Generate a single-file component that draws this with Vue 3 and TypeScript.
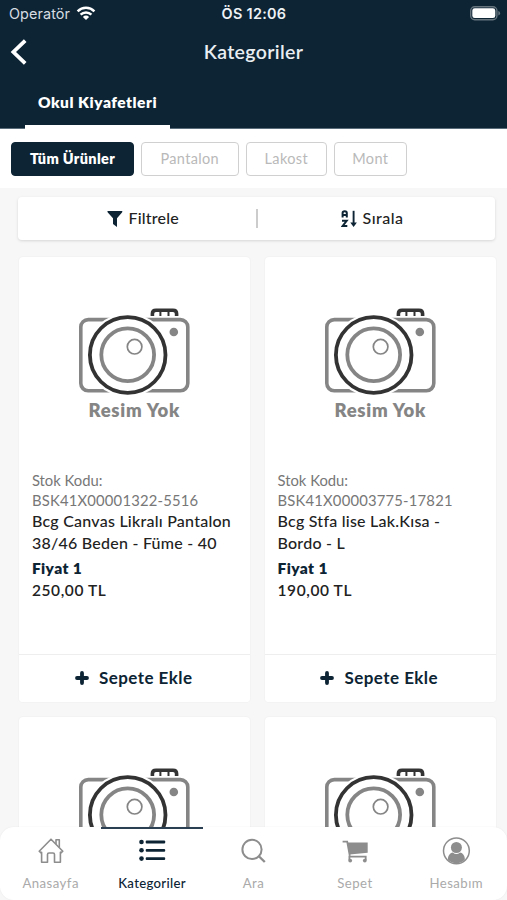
<script setup lang="ts">
interface Product {
  code: string
  name: string[]
  price: string
}

const chips: string[] = ['Tüm Ürünler', 'Pantalon', 'Lakost', 'Mont']

const products: Product[] = [
  { code: 'BSK41X00001322-5516', name: ['Bcg Canvas Likralı Pantalon', '38/46 Beden - Füme - 40'], price: '250,00 TL' },
  { code: 'BSK41X00003775-17821', name: ['Bcg Stfa lise Lak.Kısa -', 'Bordo - L'], price: '190,00 TL' },
  { code: '', name: [], price: '' },
  { code: '', name: [], price: '' },
]

const tabs: string[] = ['Anasayfa', 'Kategoriler', 'Ara', 'Sepet', 'Hesabım']
</script>

<template>
  <div class="screen">
    <header class="header">
      <div class="status">
        <div class="carrier">
          <span>Operatör</span>
          <svg width="20" height="15" viewBox="0 0 20 15" fill="none" stroke="#fff" stroke-width="2.5">
            <path d="M1.6 5.3A12 12 0 0 1 18.4 5.3" />
            <path d="M4.6 8.6A7.7 7.7 0 0 1 15.4 8.6" />
            <path d="M10 14L6.9 10.9A4.4 4.4 0 0 1 13.1 10.9Z" fill="#fff" stroke="none" />
          </svg>
        </div>
        <span class="clock">ÖS 12:06</span>
        <svg class="battery" width="31" height="15" viewBox="0 0 31 15">
          <rect x="0.7" y="0.7" width="26.2" height="13" rx="4" fill="none" stroke="#66747e" stroke-width="1.4" />
          <rect x="2.3" y="2.3" width="23" height="9.8" rx="2.4" fill="#fff" />
          <path d="M28.3 5v4.6q1.8-.6 1.8-2.3T28.3 5" fill="#66747e" />
        </svg>
      </div>
      <div class="titlebar">
        <svg width="18" height="28" viewBox="0 0 18 28" fill="none" stroke="#fff" stroke-width="3.8">
          <path d="M15.2 2.6L3.4 14L15.2 25.4" />
        </svg>
        <h1>Kategoriler</h1>
      </div>
      <div class="category"><span>Okul Kiyafetleri</span></div>
    </header>

    <nav class="chips">
      <button v-for="(chip, i) in chips" :key="chip" :class="['chip', 'chip-' + i]"><span>{{ chip }}</span></button>
    </nav>

    <main class="content">
      <div class="tools">
        <div class="tool filter">
          <svg width="16" height="18" viewBox="0 0 16 18" fill="#0c2434">
            <path d="M.6 1H15.2Q15.6 1.7 15 2.6L10 8.3V17L6 14V8.3L.8 2.6Q.1 1.7.6 1Z" />
          </svg>
          <span>Filtrele</span>
        </div>
        <i class="separator"></i>
        <div class="tool sort">
          <svg width="17" height="18" viewBox="0 0 17 18" fill="none" stroke="#0c2434" stroke-width="2">
            <path d="M1.6 7.5V3Q1.6 1.3 3.7 1.3T5.8 3V7.5M1.6 5H5.8M1 10.8H5.7L1.7 16H6.3" />
            <path d="M12.6 .8V14" stroke-width="1.9" />
            <path d="M9.3 12.6H15.9L12.6 17Z" fill="#0c2434" stroke="none" />
          </svg>
          <span>Sırala</span>
        </div>
      </div>

      <section class="grid">
        <article v-for="(p, i) in products" :key="i" class="card">
          <svg class="photo" width="230" height="211" viewBox="0 1 230 211" fill="none">
            <rect x="61.8" y="63.6" width="107" height="71.2" rx="7.5" stroke="#858585" stroke-width="3.6" />
            <circle cx="108.7" cy="99" r="42" fill="#fff" />
            <circle cx="108.7" cy="99" r="37.8" stroke="#333" stroke-width="3.8" />
            <circle cx="108.7" cy="98.7" r="26.4" stroke="#858585" stroke-width="3.8" />
            <circle cx="115.6" cy="90.7" r="7.3" stroke="#858585" stroke-width="1.7" />
            <circle cx="154.8" cy="76" r="4.3" fill="#858585" />
            <path d="M133.4 60V57.8Q133.4 54.2 137 54.2H154Q157.6 54.2 157.6 57.8V60" stroke="#333" stroke-width="3.6" />
            <path d="M141.4 55V60M149.5 55V60" stroke="#333" stroke-width="2" />
            <text v-if="p.code" class="no-image" x="69.4" y="161.2" textLength="91" lengthAdjust="spacing">Resim Yok</text>
          </svg>
          <template v-if="p.code">
            <div class="info">
              <p class="stock">Stok Kodu:</p>
              <p class="stock code">{{ p.code }}</p>
              <h2><span v-for="line in p.name" :key="line">{{ line }}</span></h2>
              <p class="price-name">Fiyat 1</p>
              <p class="price">{{ p.price }}</p>
            </div>
            <button class="add">
              <svg width="14" height="14" viewBox="0 0 14 14" fill="none" stroke="#0c2434" stroke-width="3.8" stroke-linecap="round">
                <path d="M7 2V12M2 7H12" />
              </svg>
              <span>Sepete Ekle</span>
            </button>
          </template>
        </article>
      </section>
    </main>

    <footer class="tabbar">
      <a v-for="(tab, i) in tabs" :key="tab" :class="['tab', { active: i === 1 }]">
        <svg v-if="i === 0" width="30" height="30" viewBox="0 0 30 30" fill="none" stroke="#8d8d8d" stroke-width="1.6" stroke-linejoin="round">
          <path d="M3.2 15.2L15 3.2L26.8 15.2L25 16.8L24.4 16.2V26.3H18.5V18.6Q18.5 17 17 17H13Q11.5 17 11.5 18.6V26.3H5.6V16.2L5 16.8Z" />
          <path d="M20 8V3.8H23.3V11.4" />
        </svg>
        <svg v-else-if="i === 1" width="30" height="30" viewBox="0 0 30 30" fill="#0c2434">
          <circle cx="4.5" cy="6" r="2.3" /><circle cx="4.5" cy="14.3" r="2.3" /><circle cx="4.5" cy="22.6" r="2.3" />
          <rect x="8.7" y="4.6" width="19.5" height="2.9" rx="1" />
          <rect x="8.7" y="12.9" width="19.5" height="2.9" rx="1" />
          <rect x="8.7" y="21.2" width="19.5" height="2.9" rx="1" />
        </svg>
        <svg v-else-if="i === 2" width="30" height="30" viewBox="0 0 30 30" fill="none" stroke="#8d8d8d" stroke-width="2">
          <circle cx="14" cy="13.4" r="9.6" /><path d="M20.6 20L26.8 26" stroke-width="2.4" />
        </svg>
        <svg v-else-if="i === 3" width="30" height="30" viewBox="0 0 30 30" fill="none" stroke="#8d8d8d" stroke-width="1.8">
          <path d="M2.6 5.6H7.2L9.8 19.8" />
          <path d="M7.6 6.4H27.7V16.8L9.6 18.6Z" fill="#8d8d8d" stroke="none" />
          <path d="M9.4 24V20.7H25.7V24" />
          <circle cx="10.2" cy="24.6" r="1.9" fill="#8d8d8d" stroke="none" /><circle cx="24.8" cy="24.6" r="1.9" fill="#8d8d8d" stroke="none" />
        </svg>
        <svg v-else width="30" height="30" viewBox="0 0 30 30">
          <circle cx="15.4" cy="14.8" r="12.9" fill="none" stroke="#8d8d8d" stroke-width="1.5" />
          <circle cx="15.4" cy="11.5" r="5.5" fill="#8d8d8d" />
          <path d="M6.9 23.6C7 18.8 9.4 16.7 11.8 16.4Q15.4 19.7 19 16.4C21.4 16.7 23.8 18.8 23.9 23.6Q20.4 27.4 15.4 27.4T6.9 23.6Z" fill="#8d8d8d" />
        </svg>
        <span>{{ tab }}</span>
      </a>
    </footer>
  </div>
</template>

<style>
body {
  margin: 0;
  overflow: hidden;
}
</style>

<style scoped>
* {
  box-sizing: border-box;
}
.screen {
  position: relative;
  width: 507px;
  height: 900px;
  overflow: hidden;
  display: flex;
  flex-direction: column;
  background: #f7f7f7;
  font-family: Lato, "Open Sans", sans-serif;
  color: #222;
}
span {
  white-space: nowrap;
}
svg {
  display: block;
  flex: none;
}
button {
  font: inherit;
  margin: 0;
  padding: 0;
  background: #fff;
}
h1, h2, p {
  margin: 0;
}
.header {
  flex: none;
  height: 129px;
  background: #0c2434;
  border-bottom: 1px solid #596d7b;
  color: #fff;
}
.status {
  height: 27px;
  padding: 0 8px 0 9px;
  display: grid;
  grid-template-columns: 1fr auto 1fr;
  align-items: center;
  font-family: Inter, sans-serif;
  font-size: 14.4px;
}
.carrier {
  display: flex;
  align-items: center;
  gap: 6px;
  color: #d6dce1;
  letter-spacing: 0.1px;
}
.clock {
  font-weight: 600;
  letter-spacing: 0.3px;
  color: #eef2f5;
}
.battery {
  justify-self: end;
  margin-right: -2px;
}
.titlebar {
  height: 49px;
  padding: 0 10px;
  display: grid;
  grid-template-columns: 18px 1fr 18px;
  align-items: center;
}
h1 {
  text-align: center;
  font-size: 19.5px;
  line-height: 24px;
  font-weight: 600;
  letter-spacing: 0.35px;
  color: #e9eef2;
}
.category {
  width: 145px;
  height: 53px;
  margin-left: 25px;
  border-bottom: 4px solid #fff;
  display: flex;
  justify-content: center;
  padding-top: 15px;
  font-size: 15.5px;
  line-height: 22px;
  font-weight: 800;
  letter-spacing: 0.52px;
}
.chips {
  flex: none;
  height: 59px;
  padding: 13px 11px 0;
  display: flex;
  gap: 7px;
  background: #fff;
}
.chip {
  height: 34px;
  padding-bottom: 2px;
  border: 1.5px solid #d0d0d0;
  border-radius: 4px;
  color: #b9b9b9;
  font-size: 14.5px;
  letter-spacing: 0.35px;
}
.chip-0 {
  width: 123px;
  background: #0c2434;
  border-color: #0c2434;
  color: #fff;
  font-weight: 800;
}
.chip-1 {
  width: 97.5px;
}
.chip-2 {
  width: 81.5px;
}
.chip-3 {
  width: 72.5px;
}
.content {
  padding: 9px 11px 0 18px;
}
.tools {
  height: 43px;
  width: 477px;
  border-radius: 4px;
  background: #fff;
  box-shadow: 0 1px 3px #0002;
  display: flex;
  align-items: center;
  font-size: 16px;
  font-weight: 500;
}
.tool {
  height: 43px;
  display: flex;
  align-items: center;
  gap: 5.5px;
}
.tool span {
  padding-bottom: 2px;
}
.filter {
  width: 238px;
  padding-left: 89px;
  letter-spacing: 0.2px;
}
.sort {
  padding-left: 83px;
  gap: 4.5px;
  letter-spacing: 0.5px;
}
.separator {
  width: 2px;
  height: 19px;
  background: #ccc;
}
.grid {
  margin: 17px 0 0 1.4px;
  display: grid;
  grid-template-columns: 230.6px 230.6px;
  gap: 15px;
}
.card {
  height: 445px;
  border-radius: 4px;
  background: #fff;
  box-shadow: 0 0 2px #0001;
  display: flex;
  flex-direction: column;
}
.no-image {
  font-size: 18.5px;
  font-weight: 800;
  fill: #858585;
}
.info {
  height: 186px;
  padding: 2px 12.5px;
}
.stock {
  font-size: 14.8px;
  line-height: 20px;
  color: #777;
}
.code {
  letter-spacing: 0.2px;
}
h2 {
  font-size: 16px;
  line-height: 22px;
  font-weight: 500;
  letter-spacing: 0.24px;
  padding-bottom: 3px;
}
h2 span {
  display: block;
}
.price-name, .price {
  font-size: 15.5px;
  line-height: 22px;
  letter-spacing: 0.4px;
}
.price-name {
  font-weight: 800;
  color: #0c2434;
}
.price {
  font-weight: 600;
  letter-spacing: 0.6px;
}
.add {
  height: 48px;
  border: 0;
  border-top: 1px solid #eee;
  border-radius: 0 0 4px 4px;
  display: flex;
  justify-content: center;
  align-items: center;
  gap: 10px;
  padding: 0 2px 1px 0;
  font-size: 17px;
  font-weight: 700;
  letter-spacing: 0.45px;
  color: #0c2434;
}
.add span {
  padding-bottom: 1px;
}
.tabbar {
  position: absolute;
  left: 0;
  bottom: 0;
  width: 507px;
  height: 73px;
  border-radius: 14px;
  background: #fff;
  box-shadow: 0 0 2px #0001;
  display: grid;
  grid-template-columns: repeat(5, 1fr);
}
.tab {
  display: flex;
  flex-direction: column;
  align-items: center;
  padding-top: 7px;
  border-top: 2px solid transparent;
  color: #aaa;
  font-size: 13.2px;
  letter-spacing: 0.45px;
}
.tab span {
  line-height: 20px;
  margin-top: 7px;
}
.tab.active {
  border-top-color: #2a4052;
  color: #0c2434;
  font-weight: 500;
  letter-spacing: 0.3px;
}
</style>
